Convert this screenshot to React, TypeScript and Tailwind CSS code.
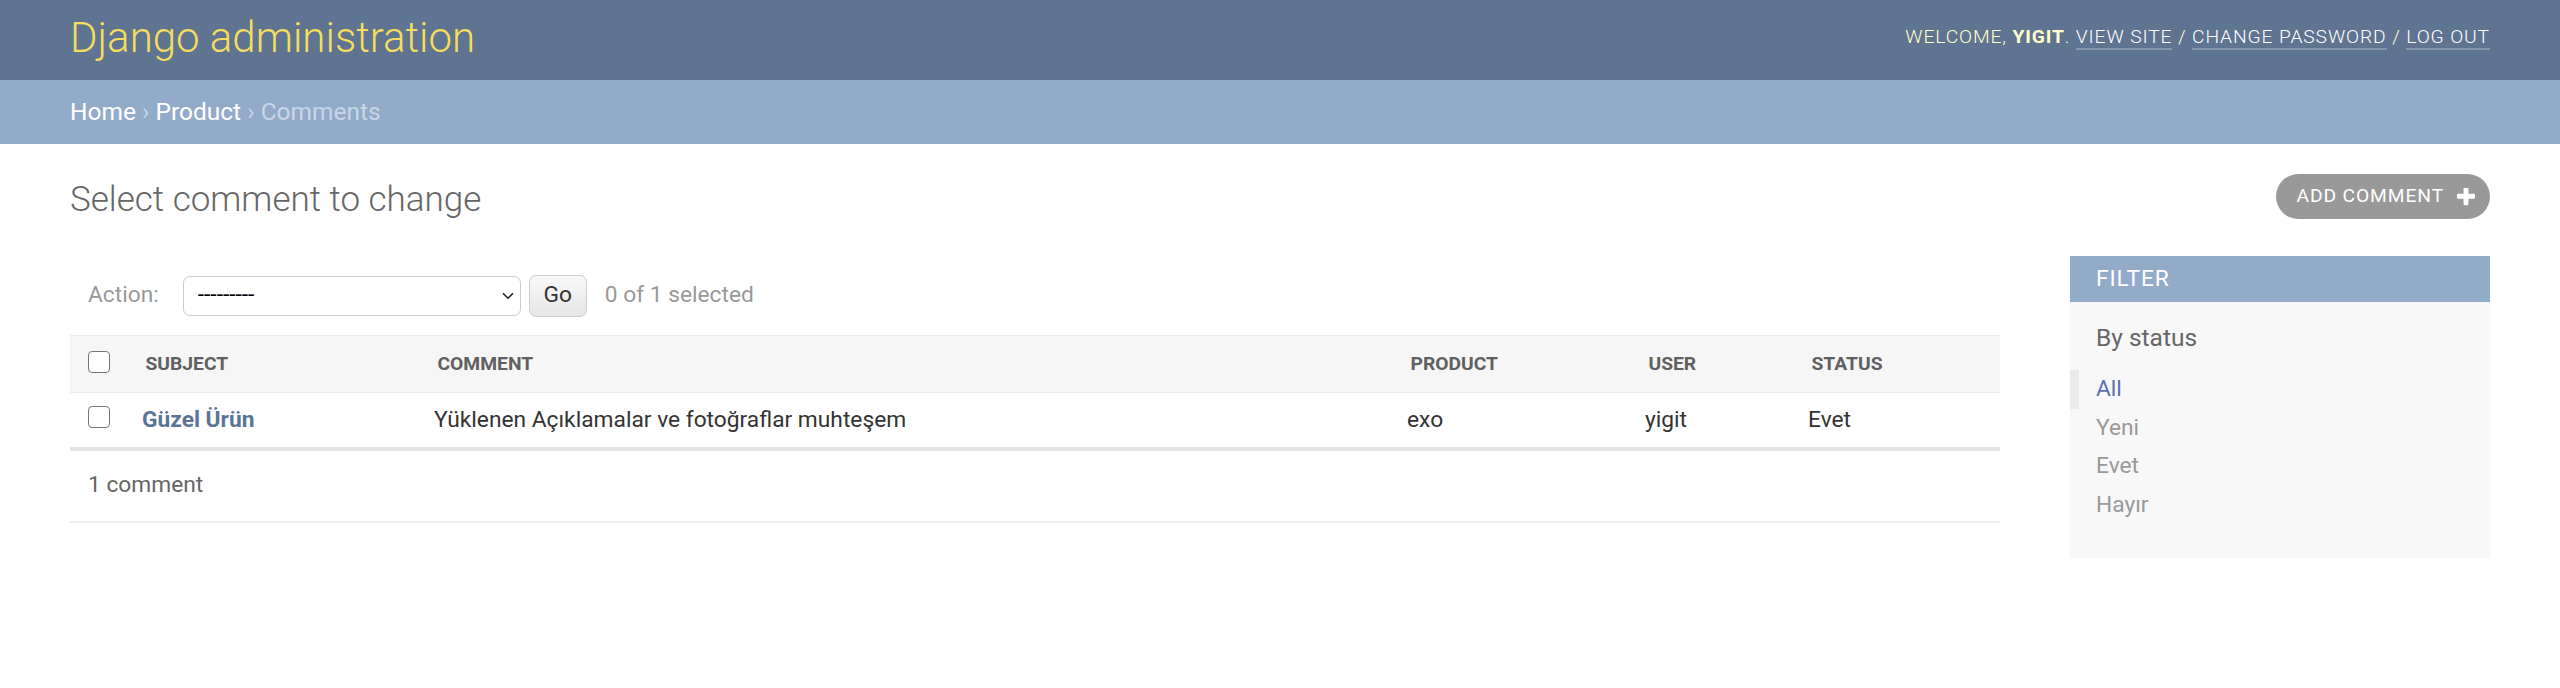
import { ChangeEvent, useState } from "react";

interface Comment {
  id: number;
  subject: string;
  comment: string;
  product: string;
  user: string;
  status: string;
}

const comments: Comment[] = [
  {
    id: 1,
    subject: "Güzel Ürün",
    comment: "Yüklenen Açıklamalar ve fotoğraflar muhteşem",
    product: "exo",
    user: "yigit",
    status: "Evet",
  },
];

const statusFilters = ["All", "Yeni", "Evet", "Hayır"];

function PlusIcon() {
  return (
    <svg viewBox="192 192 1408 1408" className="h-[18px] w-[18px]" fill="#fff">
      <path d="M1600 736v192q0 40-28 68t-68 28h-416v416q0 40-28 68t-68 28h-192q-40 0-68-28t-28-68v-416h-416q-40 0-68-28t-28-68v-192q0-40 28-68t68-28h416v-416q0-40 28-68t68-28h192q40 0 68 28t28 68v416h416q40 0 68 28t28 68z" />
    </svg>
  );
}

function Checkbox({
  checked,
  onChange,
}: {
  checked: boolean;
  onChange: (e: ChangeEvent<HTMLInputElement>) => void;
}) {
  return (
    <input
      type="checkbox"
      checked={checked}
      onChange={onChange}
      className="mb-[5px] block h-[22px] w-[22px] appearance-none rounded-[4px] border border-[#767676] bg-white checked:border-[#0075ff] checked:bg-[#0075ff]"
    />
  );
}

export default function App() {
  const [action, setAction] = useState("");
  const [selected, setSelected] = useState<number[]>([]);
  const [status, setStatus] = useState("All");

  const allChecked = selected.length === comments.length;

  function toggle(id: number) {
    setSelected((prev) =>
      prev.includes(id) ? prev.filter((x) => x !== id) : [...prev, id]
    );
  }

  return (
    <div className="min-h-screen bg-white font-['Roboto','Liberation_Sans',sans-serif] text-[#333]">
      {/* header */}
      <header className="flex h-[80px] items-center justify-between bg-[#5e7491] px-[70px] pb-[5px]">
        <h1 className="text-[42px] font-light leading-[49px] text-[#f5dd5d]">
          Django administration
        </h1>
        <div className="text-[19.25px] font-light uppercase tracking-[0.875px] text-[#ffffcc]">
          Welcome, <strong className="font-bold">yigit</strong>.{" "}
          <a href="#" className="border-b-2 border-white/25 text-white">
            View site
          </a>{" "}
          /{" "}
          <a href="#" className="border-b-2 border-white/25 text-white">
            Change password
          </a>{" "}
          /{" "}
          <a href="#" className="border-b-2 border-white/25 text-white">
            Log out
          </a>
        </div>
      </header>

      {/* breadcrumbs */}
      <nav className="flex h-[64px] items-center whitespace-pre bg-[#92abc9] px-[70px] text-[24.5px] text-[#c9d6e6]">
        <a href="#" className="text-white">
          Home
        </a>
        <span> › </span>
        <a href="#" className="text-white">
          Product
        </a>
        <span> › </span>
        <span>Comments</span>
      </nav>

      <main className="px-[70px] pt-[35px]">
        <div className="flex items-start justify-between">
          <h1 className="text-[35px] font-light leading-[41px] text-[#666]">
            Select comment to change
          </h1>
          <a
            href="#"
            className="-mt-[5px] flex h-[45px] items-center gap-[13px] rounded-full bg-[#999] pl-[21px] pr-[15px] text-[19.25px] uppercase tracking-[0.875px] text-white"
          >
            Add comment
            <PlusIcon />
          </a>
        </div>

        <div className="mt-[35px] flex gap-[70px]">
          <div className="min-w-0 flex-1">
            {/* actions */}
            <div className="flex h-[80px] items-center pl-[18px] pt-[1px] text-[22.75px] text-[#999]">
              <label className="mr-[24px]">Action:</label>
              <div className="relative">
                <select
                  value={action}
                  onChange={(e) => setAction(e.target.value)}
                  className="block h-[40px] w-[338px] appearance-none rounded-[7px] border border-[#ccc] bg-white pl-[14px] text-[22.75px] text-black outline-none"
                >
                  <option value="">---------</option>
                  <option value="delete_selected">Delete selected comments</option>
                </select>
                <svg
                  viewBox="0 0 12 8"
                  className="pointer-events-none absolute right-[7px] top-[16px] h-[8px] w-[12px]"
                  fill="none"
                  stroke="#222"
                  strokeWidth="1.6"
                >
                  <path d="M1 1.2l5 5 5-5" />
                </svg>
              </div>
              <button className="ml-[8px] h-[42px] w-[58px] rounded-[7px] border border-[#ccc] bg-gradient-to-b from-[#f8f8f8] to-[#e6e6e6] text-[22.75px] text-[#333]">
                Go
              </button>
              <span className="ml-[18px]">
                {selected.length} of {comments.length} selected
              </span>
            </div>

            {/* results */}
            <table className="w-full table-fixed border-collapse">
              <colgroup>
                <col className="w-[58px]" />
                <col className="w-[292px]" />
                <col className="w-[973px]" />
                <col className="w-[238px]" />
                <col className="w-[163px]" />
                <col />
              </colgroup>
              <thead>
                <tr className="h-[57px] border-t border-b border-[#ececec] bg-[#f6f6f6] text-left text-[19.25px] font-bold uppercase text-[#606060]">
                  <th className="pl-[18px]">
                    <div className="flex items-center">
                      <Checkbox
                        checked={allChecked}
                        onChange={() =>
                          setSelected(allChecked ? [] : comments.map((c) => c.id))
                        }
                      />
                    </div>
                  </th>
                  <th className="pl-[17.5px] font-bold">Subject</th>
                  <th className="pl-[17.5px] font-bold">Comment</th>
                  <th className="pl-[17.5px] font-bold">Product</th>
                  <th className="pl-[17.5px] font-bold">User</th>
                  <th className="pl-[17.5px] font-bold">Status</th>
                </tr>
              </thead>
              <tbody>
                {comments.map((c) => (
                  <tr key={c.id} className="h-[56px] border-b-[4px] border-[#e3e3e3] text-[22.75px]">
                    <td className="pl-[18px]">
                      <div className="flex items-center">
                        <Checkbox
                          checked={selected.includes(c.id)}
                          onChange={() => toggle(c.id)}
                        />
                      </div>
                    </td>
                    <th className="pl-[14px] text-left font-bold">
                      <a href="#" className="text-[#5b7394]">
                        {c.subject}
                      </a>
                    </th>
                    <td className="pl-[14px]">{c.comment}</td>
                    <td className="pl-[14px]">{c.product}</td>
                    <td className="pl-[14px]">{c.user}</td>
                    <td className="pl-[14px]">{c.status}</td>
                  </tr>
                ))}
              </tbody>
            </table>
            <p className="flex h-[72px] items-center border-b-2 border-[#eee] pl-[18px] text-[22.75px] text-[#666]">
              {comments.length} comment
            </p>
          </div>

          {/* filter */}
          <aside className="mt-[1px] w-[420px] shrink-0 self-start bg-[#f8f8f8] pb-[34px]">
            <h2 className="flex h-[46px] items-center bg-[#92abc9] pl-[26px] text-[22.75px] uppercase tracking-[0.875px] text-white">
              Filter
            </h2>
            <h3 className="mt-[21px] pl-[26px] text-[24.5px] leading-[30px] text-[#666]">
              By status
            </h3>
            <ul className="mt-[17px]">
              {statusFilters.map((f) =>
                f === status ? (
                  <li
                    key={f}
                    className="flex h-[38.5px] items-center border-l-[9px] border-[#eaeaea] pl-[17px] text-[22.75px]"
                  >
                    <a href="#" className="text-[#5b70b3]">
                      {f}
                    </a>
                  </li>
                ) : (
                  <li key={f} className="flex h-[38.5px] items-center pl-[26px] text-[22.75px]">
                    <a
                      href="#"
                      onClick={(e) => {
                        e.preventDefault();
                        setStatus(f);
                      }}
                      className="text-[#999]"
                    >
                      {f}
                    </a>
                  </li>
                )
              )}
            </ul>
          </aside>
        </div>
      </main>
    </div>
  );
}
